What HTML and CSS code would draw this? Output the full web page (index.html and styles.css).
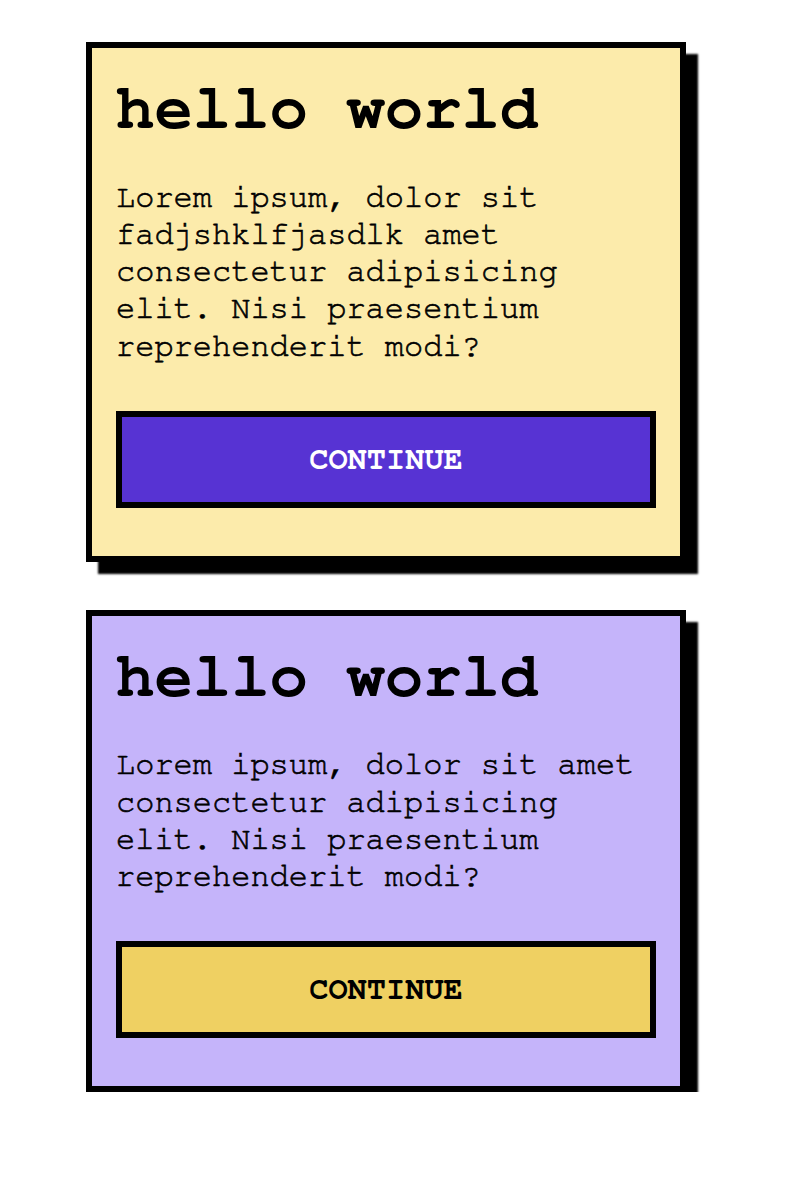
FILE: index.html
```html
<!DOCTYPE html>
<html lang="en">
<head>
<meta charset="utf-8">
<title>Cards</title>
<link rel="stylesheet" href="styles.css">
</head>
<body>
<main class="stack">
  <section class="card card-yellow">
    <h1 class="card-title">hello world</h1>
    <p class="card-text">Lorem ipsum, dolor sit fadjshklfjasdlk amet consectetur adipisicing elit. Nisi praesentium reprehenderit modi?</p>
    <button class="card-btn btn-purple">CONTINUE</button>
  </section>
  <section class="card card-purple">
    <h1 class="card-title">hello world</h1>
    <p class="card-text">Lorem ipsum, dolor sit amet consectetur adipisicing elit. Nisi praesentium reprehenderit modi?</p>
    <button class="card-btn btn-yellow">CONTINUE</button>
  </section>
</main>
</body>
</html>
```

FILE: styles.css
```css
* { box-sizing: border-box; }

body {
  margin: 0;
  background: #ffffff;
  font-family: "Nimbus Mono PS", "Nimbus Mono L", "FreeMono", "Courier 10 Pitch", "Liberation Mono", monospace;
  color: #000;
}

.stack {
  display: flex;
  flex-direction: column;
  align-items: flex-start;
  gap: 48px;
  padding: 42px 0 0 86px;
}

.card {
  width: 600px;
  border: 6px solid #000;
  padding: 24px 24px 48px;
  box-shadow: 12px 12px 2px #000;
  display: flex;
  flex-direction: column;
}

.card-yellow { background: #fcebab; }
.card-purple { background: #c5b4fa; }

.card-title {
  margin: 0 0 32px;
  font-size: 64px;
  font-weight: 700;
  line-height: 74.5px;
}

.card-text {
  margin: 0 0 46px;
  font-size: 32px;
  line-height: 37.25px;
  -webkit-text-stroke: 0.6px #000;
}

.card-btn {
  display: block;
  width: 100%;
  border: 6px solid #000;
  padding: 24px 0;
  font-family: inherit;
  font-size: 32px;
  font-weight: 700;
  line-height: 37px;
  text-align: center;
  cursor: pointer;
}

.btn-purple { background: #5733d3; color: #fff; }
.btn-yellow { background: #efd062; color: #000; }
```
